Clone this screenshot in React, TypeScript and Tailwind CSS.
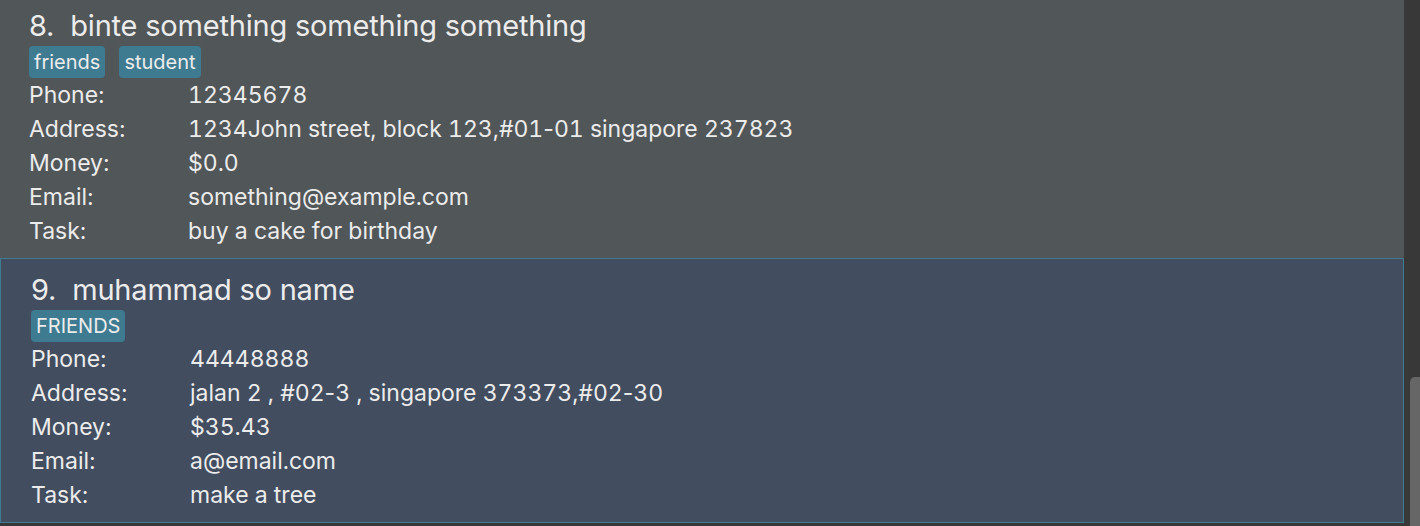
type Person = {
  id: number
  name: string
  tags: string[]
  phone: string
  address: string
  money: string
  email: string
  task: string
}

const people: Person[] = [
  {
    id: 8,
    name: 'binte something something something',
    tags: ['friends', 'student'],
    phone: '12345678',
    address: '1234John street, block 123,#01-01 singapore 237823',
    money: '$0.0',
    email: 'something@example.com',
    task: 'buy a cake for birthday',
  },
  {
    id: 9,
    name: 'muhammad so name',
    tags: ['FRIENDS'],
    phone: '44448888',
    address: 'jalan 2 , #02-3 , singapore 373373,#02-30',
    money: '$35.43',
    email: 'a@email.com',
    task: 'make a tree',
  },
]

// digits are wide in the original, but hyphens stay narrow
function Value({ text }: { text: string }) {
  const parts = text.split(/(-)/)
  return (
    <span>
      {parts.map((s, i) =>
        s === '-' ? <span key={i}>-</span> : <span key={i} className="tabular-nums">{s}</span>
      )}
    </span>
  )
}

function Field({ label, value }: { label: string; value: string }) {
  return (
    <div className="flex h-[34px] items-center whitespace-pre">
      <span className="w-[159px] shrink-0">{label}</span>
      <Value text={value} />
    </div>
  )
}

function PersonCard({ p, selected }: { p: Person; selected?: boolean }) {
  return (
    <div
      className={
        selected
          ? 'bg-[#424d5f] border border-[#3e7b91] pl-[30px] pt-[11px] pb-[10px]'
          : 'bg-[#515658] pl-[29px] pt-[6px] pb-[10px]'
      }
    >
      <div className="flex h-[40px] items-center text-[29px] tracking-[-0.2px]">
        <span>{p.id}.</span>
        <span className="ml-[16px]">{p.name}</span>
      </div>
      <div className="flex gap-[14px]">
        {p.tags.map((t) => (
          <span
            key={t}
            className="flex h-[32px] items-center rounded-[4px] bg-[#3e7b91] px-[5px] text-[20px]"
          >
            {t}
          </span>
        ))}
      </div>
      <Field label="Phone:" value={p.phone} />
      <Field label="Address:" value={p.address} />
      <Field label="Money:" value={p.money} />
      <Field label="Email:" value={p.email} />
      <Field label="Task:" value={p.task} />
    </div>
  )
}

export default function App() {
  return (
    <div
      className="flex h-[526px] w-[1420px] overflow-hidden bg-[#383838] text-[23px] text-[#ececec]"
      style={{ fontFamily: 'Inter, "Open Sans", sans-serif' }}
    >
      <div className="w-[1404px] shrink-0">
        <PersonCard p={people[0]} />
        <PersonCard p={people[1]} selected />
      </div>
      <div className="flex flex-1 flex-col">
        <div className="h-[377px]" />
        <div className="ml-[6px] flex-1 rounded-tl-[5px] bg-[#666666]" />
      </div>
    </div>
  )
}
